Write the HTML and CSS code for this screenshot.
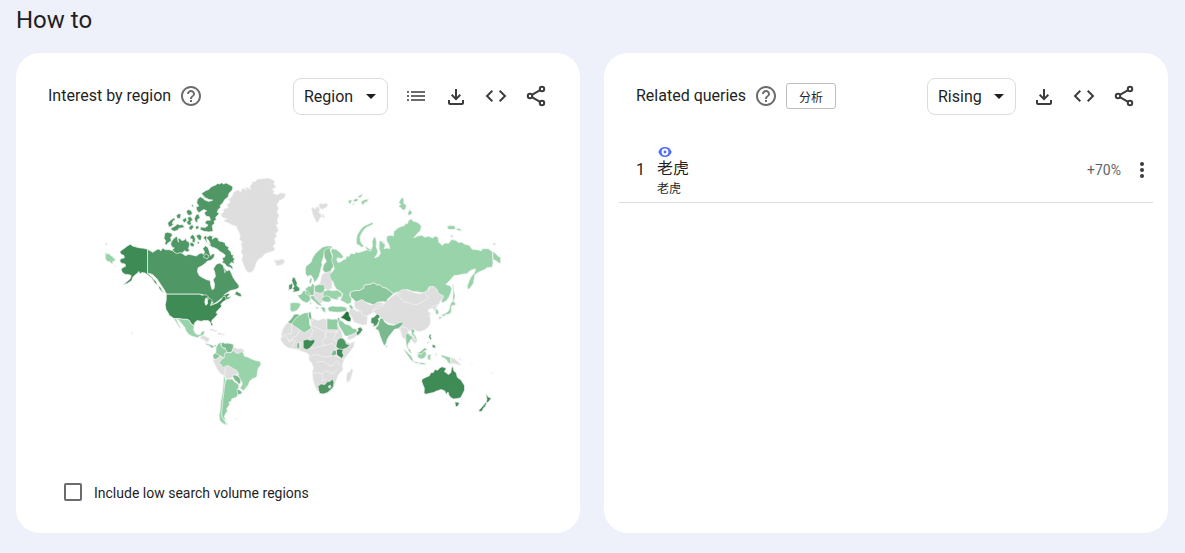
FILE: index.html
```html
<!DOCTYPE html>
<html lang="en">
<head>
<meta charset="utf-8">
<meta name="viewport" content="width=device-width, initial-scale=1">
<title>How to</title>
<link rel="stylesheet" href="styles.css">
</head>
<body>
<svg class="sprite" aria-hidden="true">
  <symbol id="help" viewBox="0 0 24 24"><path d="M11 18h2v-2h-2v2zm1-16C6.480 2 2 6.480 2 12s4.480 10 10 10 10-4.480 10-10S17.520 2 12 2zm0 18c-4.410 0-8-3.590-8-8s3.590-8 8-8 8 3.590 8 8-3.590 8-8 8zm0-14c-2.210 0-4 1.790-4 4h2c0-1.100.9-2 2-2s2 .9 2 2c0 2-3 1.750-3 5h2c0-2.250 3-2.500 3-5 0-2.210-1.790-4-4-4z"/></symbol>
  <symbol id="list" viewBox="0 0 24 24"><path d="M3 7h2v2H3zm4 0h14v2H7zm-4 4h2v2H3zm4 0h14v2H7zm-4 4h2v2H3zm4 0h14v2H7z"/></symbol>
  <symbol id="download" viewBox="0 0 24 24"><path d="M12 16.500l-5-5 1.400-1.450 2.600 2.600V5h2v7.650l2.600-2.600L17 11.500zM6 21c-1.100 0-2-.9-2-2v-3h2v3h12v-3h2v3c0 1.100-.9 2-2 2z"/></symbol>
  <symbol id="embed" viewBox="0 0 24 24"><path d="M9 16.600L4.400 12 9 7.400 7.600 6l-6 6 6 6zm6 0l4.600-4.600L15 7.400 16.400 6l6 6-6 6z"/></symbol>
  <symbol id="share" viewBox="0 0 24 24"><g fill="none" stroke="currentColor" stroke-width="2"><circle cx="18" cy="5" r="2.200"/><circle cx="6" cy="12" r="2.200"/><circle cx="18" cy="19" r="2.200"/><path d="M7.900 10.900l8.200-4.800M7.900 13.100l8.200 4.800"/></g></symbol>
  <symbol id="more" viewBox="0 0 24 24"><circle cx="12" cy="6" r="2"/><circle cx="12" cy="12" r="2"/><circle cx="12" cy="18" r="2"/></symbol>
</svg>

<main class="page">
  <h1 class="page-title">How to</h1>
  <div class="cards">
    <section class="card">
      <header class="card-head">
        <h2 class="card-title">Interest by region</h2>
        <button class="help" type="button" aria-label="Help"><svg class="icon"><use href="#help"/></svg></button>
        <div class="tools">
          <div class="picker">
            <select class="picker-select" aria-label="Resolution"><option>Region</option></select>
            <svg class="picker-arrow" viewBox="0 0 10 5" aria-hidden="true"><path d="M0 0h10L5 5z"/></svg>
          </div>
          <button class="tool muted" type="button" aria-label="Show as list"><svg class="icon"><use href="#list"/></svg></button>
          <button class="tool" type="button" aria-label="Download"><svg class="icon"><use href="#download"/></svg></button>
          <button class="tool" type="button" aria-label="Embed"><svg class="icon"><use href="#embed"/></svg></button>
          <button class="tool" type="button" aria-label="Share"><svg class="icon"><use href="#share"/></svg></button>
        </div>
      </header>

      <svg class="map" viewBox="300 510 1230 780" role="img" aria-label="World map of interest by region">
        <!-- Alaska, Canada and the Arctic islands -->
        <g transform="translate(285 510)">
          <path class="c1" d="M31 218l7 4-5 3zM31 244l6 8 4-4 6 8 5 1 4 7 6 2-4 6-5 1 1 7-6-1-4-5-7-1-6-8zM56 284l8 4-2 2z"/>
          <path class="c6" d="M157 237L157 308 165 316 175 326 183 334 187 346 178 336 170 324 160 315 150 308 140 306 134 311 131 303 126 309 118 315 112 322 110 330 98 338 83 344 95 334 105 325 108 315 98 312 90 312 82 306 78 298 82 292 91 288 90 281 80 279 74 272 76 266 88 262 86 255 78 252 74 244 82 238 90 232 98 226 106 222 112 227 120 229 130 232 145 234z"/>
          <path class="c5" d="M157 237L165 241 172 246 180 241 188 236 195 238 196 242 203 233 210 238 222 238 232 241 243 248 255 246 262 250 270 256 280 252 290 254 302 257 312 250 318 248 324 252 328 246 322 235 330 226 338 232 342 245 345 256 352 250 358 252 355 262 346 270 336 272 328 280 318 287 308 292 306 304 312 316 322 322 334 328 344 330 346 345 350 358 356 354 357 340 353 328 360 318 358 306 354 295 362 282 372 278 382 284 388 296 394 302 402 298 408 310 412 320 420 332 430 345 430 352 420 357 405 360 396 366 385 374 398 368 402 372 395 380 408 378 400 385 388 389 378 383 370 390 360 397 345 405 352 396 345 388 335 385 322 372 312 371 214 371 205 355 195 340 185 325 172 312 157 308zM189 344l8 8 3 8 8 8-8-4-8-9zM417 371l7-10 3 4 9 4 2 10-9-2z"/>
          <path class="c5" d="M318 70L330 62 340 58 348 50 362 44 366 40 372 42 378 38 384 42 392 39 402 44 412 50 410 60 400 70 398 80 388 88 382 98 374 106 375 112 368 118 365 126 371 130 360 142 363 148 356 152 357 160 350 166 353 183 340 185 325 183 314 178 316 170 330 172 338 165 328 158 334 150 345 150 342 140 332 138 326 128 334 122 325 118 316 124 310 128 303 118 302 110 310 108 304 98 306 88 314 80 322 84 328 90 340 94 352 90 340 88 328 82z"/>
          <path class="c5" d="M217 158l10-9 9-6 4 5-7 5-2 8 5-1-6 7-9 4zM227 173l10-4 10-8 6 3 8-1 7 8-9 2-8 1-4 6-10 3-9-4zM243 136l8-6 6 3-2 11-9 1zM261 149l10-7 4 9-9 7zM273 123l6-5 9 4 3 9-8 5-7-3zM290 103l4 3-1 5-5-4zM276 142l9-3 7 9-6 7 3 8-9 2-7-9 6-5zM281 170l9-7 5 7-6 9-8-1zM301 135l8-4 5 12-8 6 2 8-8-2-3-9zM299 169l10-3 2 8-8 4z"/>
          <path class="c5" d="M209 188l8-2 12 3 2 7-5 6 2 10-9 5-6 8-4-5 2-9-5-7zM229 213l7-9 8-6 3 6 3 12-4-10 8-2 5 7 8-2 4-6 3 9 7 3 2 9-4 11 4 5-7 5-9-4-5 7-9-1-9 3-8-5-5-7 6-5-7-3-4-9zM285 198l7-5 5 5 3 9-2 10-8-2 1-8-7-2zM302 195l11-3 6 7-3 12-8-3zM283 219l7-3 7 7-3 7-9-3zM307 213l5 2-2 7-5-3zM323 203l8-7 3 5 9-5 9 2-2 9 9-6 8 2 3 9 10 2 8 3 3 9 9 4-2 7 8 7 2 9 6 1-2 8 6 3-4 6 2 8-9-3-5 6 8 5 3 10-9-6-10-3-7-9-8-2 4-6-3-9 7-1 2-7-8-6-7-4-8-7-10-5-8-2-8-9-8-5-3-8zM333 203l2 14 10 5-5-11zM324 257l8-6 9 6-5 8-9-2zM385 290l6 9-3 8z"/>
        </g>

        <!-- Greenland, Svalbard, Iceland -->
        <g class="c0" transform="translate(645 510)">
          <path d="M16 132L25 125 22 118 38 112 34 104 44 96 40 88 50 78 52 70 60 62 68 60 75 66 78 58 86 54 92 62 90 52 100 54 104 60 103 48 110 40 108 36 120 34 124 28 140 26 155 24 168 28 178 34 172 42 180 46 178 54 168 58 176 62 172 70 184 74 196 68 210 72 206 82 198 88 190 92 184 104 188 115 184 125 190 136 184 150 188 158 182 165 188 180 180 190 183 198 176 206 180 218 172 228 178 235 174 242 160 246 148 250 140 260 130 266 122 276 118 290 112 302 103 307 95 304 88 294 84 282 78 270 82 255 76 245 80 232 76 222 80 215 72 208 74 196 70 185 66 178 62 168 50 164 38 158 26 154 28 148 36 146 20 142z"/>
          <path d="M286 113l6-2 5 7 4-8 9 1 2 9-4 6 8 6 2 8-6 3-4 11-6 3-4-9-5-9-3-9zM308 103l9-4 4 3 10-3 5 4-3 8-8 3-5 4-8-4zM321 130l3 5 3 8-8-2z"/>
          <path d="M176 268l8 3 5-4 8 1 7-2 3 7-6 8-10 4-11-1 3-5-7-4z"/>
        </g>

        <!-- United States, Central and South America -->
        <g transform="translate(285 780)">
          <path class="c6" d="M213 101L312 101 320 104 332 103 340 110 330 114 328 125 331 134 336 130 336 118 343 113 350 120 347 130 345 135 365 127 377 118 383 108 389 108 392 118 382 124 376 130 378 138 370 146 362 155 366 162 357 172 350 178 348 185 352 192 350 197 346 192 344 184 338 180 325 180 318 182 305 180 298 186 296 195 288 190 280 178 272 176 262 176 250 174 236 174 222 164 218 156 212 146 210 132 213 118z"/>
          <path class="c1" d="M236 174L250 174 262 176 272 176 280 178 288 190 296 195 295 208 299 217 306 222 315 221 319 212 328 211 327 217 322 225 313 226 307 231 290 227 279 220 272 210 268 200 258 188 250 178 243 176 250 192 258 204 250 198 244 188 239 180zM107 214l5 2-2 3z"/>
          <path class="c0" d="M313 233l5-7 10-1 10 6 6 3-5 5 1 6-8-2-8-6zM340 207l7-3 10 3 9 5-6 1-11-4zM366 218l7-2 8 3 9 3-9 1-6-2-9 1z"/>
          <path class="c3" d="M329 246l8 4 8 1 8 4 9-3 1 5-8 1-5 5-9-8-9-3z"/>
          <path class="c2" d="M362 259l6-10 10-5-2 8 5 9 9 2 6 5-4 9 2 9-8 2-1 14-4-5-9-3-9-7-5-4 3-9z"/>
          <path class="c4" d="M378 248l3-3 8 3 6-1 12 2 8 3-2 6 5 5-6 8-8 4-9 2-3-8-3-7-9-2-3-7z"/>
          <path class="c0" d="M413 260l8 2 6 2 12-1 7 8-5 6-8 1-11 1-7-4-5-8z"/>
          <path class="c3" d="M352 283l7-6 9 4 7 5-7 7-8 4-7-5z"/>
          <path class="c0" d="M351 295l7 3 10-6 5-7 8 4 5 3-7 7-3 7 7 6 7 2 2 10-3 8 3 8-4 6-14-9-10-14-6-13z"/>
          <path class="c1" d="M378 296l8-5 1-13 9-3 10 1 8-7 8 9 9-1 7-5 6 6 2 8 10 3 12 6 12 4 14 3 2 10-8 10-3 12-1 12-5 5-9 3-8 7-4 11-8 10-6 8-11-9 6-8 1-9-7-8-3-10-9-8-8-7-11-3-10-7-10-1-5-9-8-1z"/>
          <path class="c0" d="M388 317l9-3 9 5 10 6 8 4 6 12-9-1-7 3-4 8-8 2-11 1-5-14 3-9z"/>
          <path class="c4" d="M411 346l6-4 8 3 8 6 3 14-7 6-3-7-8-5z"/>
          <path class="c4" d="M423 384l8 3 9 6-4 7-9 1-5-4z"/>
          <path class="c2" d="M390 359L397 354 405 355 410 354 415 361 423 366 430 373 429 378 434 375 428 382 424 390 427 398 426 406 415 412 409 413 407 421 400 424 402 431 397 438 393 444 396 450 390 458 386 468 392 478 383 475 377 462 375 445 378 425 382 405 384 385z"/>
          <path class="c1" d="M385 342L390 357 387 373 385 395 382 416 380 441 378 456 380 469 386 478 392 484 396 490 390 492 380 486 372 477 371 463 374 444 376 421 380 400 383 375zM419 472l4 2-4 1zM389 484l9 5-8 3z"/>
        </g>

        <!-- Europe and the Middle East -->
        <g transform="translate(810 690)">
          <path class="c0" d="M155 130l16-5 10-6 3 25-1 30-14 5-11-10-9 5-9-8 8-11 3-14zM127 187l11-6 12 2 9 6 2 15-10 14-11 6-8-13-9-12z"/>
          <path class="c2" d="M104 110L112 102 120 96 125 83 133 70 144 60 154 51 168 47 180 47 184 53 174 58 165 59 160 70 156 85 152 96 154 104 150 114 148 124 144 138 137 150 130 155 127 144 120 134 110 138 104 130zM119 142l5 4-4 13-6-3z"/>
          <path class="c3" d="M159 62L169 54 177 52 179 65 184 76 189 91 188 107 178 123 162 127 155 117 158 104 166 93 160 80z"/>
          <path class="c5" d="M66 140l7 3 3 8 3 6-1 8 5 5 4 3-1 8-11 3-10 1 5-7-5-4 5-6-4-8-3-10zM54 164l8-5 4 4-2 12-10 4z"/>
          <path class="c2" d="M80 194l11-3 6-10 12-1 5 7 6 8-2 14-9 8-12-4-8-7zM104 175l9-8 7 1 4-9 7 5-1 21-2 10-12 1-12-7zM130 167l13-5 17 1 2 12-5 12-12 1-14-5zM119 196l10-1 4 10 11 10 9 10-5 1-8-5-9-8-7-6-8-6zM133 229l10 1-3 6zM118 211l4 9-5 1z"/>
          <path class="c1" d="M58 218l10-2 16 1 6 3-4 10-8 10-13 4-7-5zM157 183L172 178 184 181 200 179 214 190 211 199 200 201 203 208 193 207 179 203 166 205 156 198z"/>
          <path class="c2" d="M154 201l10-5 12 2 5 12-9 5-13-2-7-6zM149 231l7-2 8 3-2 6 3 8-7-2zM172 230l12-4 14 2 13-1 16 4 1 10-15 3-14 1-12-1-12-1-4-7z"/>
          <path class="c2" d="M199 272L206 267 214 272 222 280 236 284 246 294 256 294 258 304 250 312 232 316 222 316 213 300 204 286z"/>
          <path class="c0" d="M229 318l12-6 13-6 6 7-12 9-17 6zM241 229l9 8 8 5 14-4 14 9 3 15-2 20-13 1-13-4-12-5-7-14-8-13 2-13zM268 226l12-6 13 4 11-2 13 9-4 12-14 4-14-4z"/>
          <path class="c5" d="M260 292l9-3 6 8-7 11-9 7-4-8 6-7z"/>
          <path class="c7" d="M216 255l7-9 5-5 6 5 1 9 5 8-1 10-10-1-10-6-11-5z"/>
          <path class="c4" d="M199 264l5-4 2 6-3 10-5-1z"/>
          <path class="c2" d="M233 222l8 1 5 7-1 6-7-1z"/>
          <path class="c0" d="M12 94l5-5 8 1 5-3 10 3 1 6-9 7-12 3z"/>
        </g>

        <!-- Africa -->
        <g transform="translate(810 690)">
          <path class="c0" d="M48 278L64 278 88 300 118 290 120 265 123 262 141 270 157 264 171 268 198 270 204 290 212 304 215 320 224 331 236 338 251 332 248 348 236 364 220 384 214 402 216 416 202 432 196 448 190 466 176 480 160 488 146 488 134 470 127 448 124 425 128 410 122 396 114 388 115 372 106 366 94 362 82 356 66 354 50 350 38 340 30 328 32 312 36 295z"/>
          <path class="border" d="M62 280v28l-27 7M86 301l-8 15-13 5-2 9-15-5M115 286l11 12-5 17-9 11M128 262l-9 23 14 4 32 15v21M168 266v37l35 2M165 304l-3 17-9 12 9 12M198 298l-4 14-6 10 8 13M162 345l20-7 14 11M121 353l22-4 19-7M121 374l18-3 18 8 21-1 9-12 9-15M138 394l18-3 20 14 14-2M126 426l28 2 8-9 12 5M154 428v23l14-8M174 424l13 5 12-16M100 300l14-2M32 318l18 2 5 16 9-9 11 6M190 375l19 6 10 6M187 400l10-10 12 16M196 335l15 10 10 10M83 354l-1-19 9 1-2 18M65 350l5-15"/>
          <path class="c4" d="M50 276l12-12 8-13 14-1 2 11-11 9-12 10zM112 247l8-4 1 12 2 7-5 5-6-8z"/>
          <path class="c2" d="M75 262L86 254 100 247 112 246 112 256 116 266 116 282 122 292 108 302 100 306 90 300 62 280zM168 264l15 2 14-1 5 8-3 5 3 20-34-1z"/>
          <path class="c6" d="M97 329l12-3 10 3 12-3 1 8-8 10-7 8-9 5-7-3-4-4zM196 357l11-4 10 3-3 9 4 9-6 9-15-11z"/>
          <path class="c4" d="M78 337l7-2 2 16-9 4zM187 358l9 1 1 12-9 4-8-2z"/>
          <path class="c5" d="M200 327l8-5 8 1 7 8 3 9 11 2-10 10-12 4-13-2-7-7 2-11z"/>
          <path class="c5" d="M141 466L150 459 162 461 168 453 178 451 185 444 189 455 187 468 178 478 170 485 158 489 147 488 143 478z"/>
          <path class="c0" d="M172 466l6-3 2 5-5 4z"/>
          <path class="c0" d="M228 427l8-4 6-11 4 7-4 14-6 18-7 4-3-10z"/>
        </g>

        <!-- Russia and Kazakhstan -->
        <g transform="translate(960 555)">
          <path class="c1" d="M32 190L45 192 58 202 67 213 62 220 50 217 47 224 52 232 60 228 66 224 75 220 76 211 83 214 90 204 100 206 104 200 112 202 125 198 137 194 146 190 151 192 154 181 153 168 158 157 163 155 166 170 165 185 170 197 167 208 160 217 171 214 178 204 174 190 174 178 175 166 182 168 188 175 188 164 192 182 188 190 198 188 206 190 203 178 196 166 197 153 208 150 217 152 218 138 224 134 228 129 240 124 250 121 253 114 258 116 262 106 270 101 275 108 285 110 295 116 300 124 297 136 288 145 277 158 290 152 302 150 310 156 322 153 333 158 343 152 350 157 352 170 360 178 364 180 370 173 382 174 390 163 402 165 412 172 420 170 430 177 443 180 452 192 465 193 480 196 482 190 500 190 513 200 514 234 512 245 505 246 497 246 490 252 480 256 468 262 460 268 458 280 455 295 445 308 440 312 437 303 441 290 448 275 459 262 462 250 455 252 445 256 436 265 425 266 412 269 398 270 385 285 373 297 384 300 391 308 388 322 382 336 374 346 366 351 360 350 362 340 361 330 350 326 345 313 335 304 322 306 318 318 305 322 288 319 275 318 258 312 250 319 238 321 225 320 217 325 208 318 195 308 185 306 176 298 168 299 158 292 148 296 130 299 127 309 115 315 100 316 88 320 86 330 92 340 90 352 80 356 70 350 58 344 62 335 66 325 57 317 45 310 40 300 36 288 28 280 26 268 32 262 40 250 36 236 32 225 35 210 30 200z"/>
          <path class="c1" d="M106 163L108 150 115 138 122 128 132 121 141 117 154 111 156 116 148 121 137 126 128 134 122 144 117 154 118 166 122 176 129 182 122 186 114 180 106 176zM131 182l10 6 10 8-8 0-8-6zM81 47l8-3 5 4-5 3 2 5-7-1zM93 56l8-2-4 6zM97 44l9-4 6 3-4 6-10 1zM109 35l7-4 9-6-4 11-7 2zM120 50l9-6 14-2-6 9-7 1-3 8-6-4zM233 52l4-8 6-8 5 9-1 9 9 7-4 12-7 2-7-8-7-3 8-6zM260 83l5-10 8 9-4 7-9 1zM377 124l8-3 14 1 3 5-4 6-10 0-9-2zM401 131l12-2 8 6-6 2zM387 149l7 2 1 5-7-2zM514 175l8-1v4l-7 1zM514 198l7 6 9 9 7 4v17l-7-2-7-6-9-4zM393 296l3 2 1 17 4 15-2 12-4 8-1-14 1-18z"/>
          <path class="c3" d="M88 320L100 316 115 315 127 309 130 299 148 296 158 292 168 299 176 298 185 306 195 308 208 318 217 325 208 333 200 340 196 350 184 348 172 350 160 361 148 354 135 351 124 344 113 347 104 352 98 342 88 334z"/>
          <path class="c0" d="M100 347l10 2 11-7 13 8 14 8 13-2 7-6 16 1 3 10-6 13-16 5-13 3-13 9-14-1-5-13-15-6-5-9z"/>
          <path class="c4" d="M169 380l8-4 10 7-8 7h-9z"/>
        </g>

        <!-- South and east Asia, Oceania -->
        <g transform="translate(1110 840)">
          <path class="c0" d="M4 88L18 76 33 72 47 63 57 52 67 45 76 38 85 32 92 28 104 27 114 31 130 37 145 40 160 35 172 28 175 18 188 18 196 26 202 40 215 45 216 52 208 60 202 72 190 76 182 84 172 86 170 94 178 96 175 106 178 118 176 130 169 141 160 148 148 152 138 152 128 147 118 150 110 152 106 164 98 166 90 160 86 148 78 136 70 132 58 130 44 124 34 116 24 106 14 100z"/>
          <path class="border" d="M76 42l9 8 14 15 16 2 11 5 11 0 16-8 13-6 6-8-10-8M3 93l13-8 14-5 12-11M76 43l13-5"/>
          <path class="c0" d="M180 80l12-7 6 2-5 10 5 5-5 3-6-6zM86 137l7 3 8-1 10 7-1 10 9 5 12 12 3 10-3 7-7-7-8-11-8 3 2 9 1 9-6-9-4-10-7-2-4-12z"/>
          <path class="c1" d="M192 87l6-2 4 9-1 7-6 1-3-8zM237 70l7-9 8 7-1 7-8-1-4 6 1 10-2 7-6 4-9 1-5 5-8-1 4-5 10-4 8-7 2-8zM202 109l8-2-1 6-5 4z"/>
          <path class="c5" d="M0 112l9-3 9-9 6 3 3 8-6 3 3 7-8 14-11 3 3-7-9-5z"/>
          <path class="c4" d="M12 143L20 135 24 122 28 112 36 114 40 124 52 132 68 134 80 128 92 124 96 128 88 138 80 144 70 146 62 156 54 166 48 176 44 192 38 194 32 180 26 164 22 150zM43 189l5 8-3 3z"/>
          <path class="c2" d="M103 159l8-1 4 6 7 2 2 8-8 5 1 6-5 1-3 9 7 14-6-5-5-10-1-14zM119 146l9-1 3 9-5 3 9 13 2 12-8 5 4-9-3-8-9-10z"/>
          <path class="c3" d="M111 202l5 4 5 11-5-1-5-8zM138 216l8-3 7-5 7-7 8 5-9 5-4 7-9 2z"/>
          <path class="c5" d="M174 162l6-2-2 10 4 5-5 2-5-7zM183 192l8 1 2 8-6 1-5-5zM167 190l4-8 1 4z"/>
          <path class="c1" d="M96 204l7 5 11 11 8 9 5 13-7-3-9-12-9-13zM122 242l12 1 12 3-1 3-15-3zM139 219l11 1 8-9 6 3 1 8-6 10-8 3-12-5zM169 222l11 0-3 5 2 12-6-3-4 2zM146 245l9 1 10 3-6 3-14-2zM211 222l8 3 8 2 10 3 2 20-10-5-3-7-9-7-8-3zM193 216l4 5-3 4z"/>
          <path class="c0" d="M237 229l12 5 12 10 9 10-13-3-9-3-9 0zM260 237l9-5-3 7z"/>
          <path class="c6" d="M152 295L164 289 174 285 178 276 186 275 190 266 199 268 205 261 212 258 222 261 224 264 219 272 231 281 238 276 240 262 244 256 247 270 254 276 258 290 268 297 274 306 279 314 279 328 274 338 268 350 258 353 246 354 238 350 232 342 230 333 224 340 220 330 210 326 196 330 186 335 172 338 164 340 158 337 159 322 154 310 151 302zM250 363l10 1 3 3-4 9-6 1zM342 340l4 3 5 6 8 3-6 8-6 5-3-2 2-8-1-7zM322 388l9-10 8-9 3-6 3 3-3 9-7 7-3 8-8 2z"/>
          <path class="c0" d="M358 277l7-3-4 5zM276 235l4 2-4 1zM299 246l5 3-5 0z"/>
        </g>
      </svg>

      <div class="low-volume">
        <input class="checkbox" type="checkbox" id="low-volume">
        <label class="low-label" for="low-volume">Include low search volume regions</label>
      </div>
    </section>

    <section class="card">
      <header class="card-head">
        <h2 class="card-title">Related queries</h2>
        <button class="help" type="button" aria-label="Help"><svg class="icon"><use href="#help"/></svg></button>
        <button class="analyze" type="button">分析</button>
        <div class="tools">
          <div class="picker">
            <select class="picker-select" aria-label="Sort"><option>Rising</option></select>
            <svg class="picker-arrow" viewBox="0 0 10 5" aria-hidden="true"><path d="M0 0h10L5 5z"/></svg>
          </div>
          <button class="tool" type="button" aria-label="Download"><svg class="icon"><use href="#download"/></svg></button>
          <button class="tool" type="button" aria-label="Embed"><svg class="icon"><use href="#embed"/></svg></button>
          <button class="tool" type="button" aria-label="Share"><svg class="icon"><use href="#share"/></svg></button>
        </div>
      </header>

      <ul class="queries">
        <li class="query">
          <span class="rank">1</span>
          <div class="term">
            <svg class="eye" viewBox="0 0 14 10" aria-hidden="true"><path class="eye-shape" d="M7 0c3.200 0 5.600 1.900 6.700 5C12.600 8.100 10.200 10 7 10S1.400 8.100.3 5C1.400 1.900 3.800 0 7 0z"/><circle class="eye-ring" cx="7" cy="5" r="2.400"/></svg>
            <span class="term-name" lang="zh">老虎</span>
            <span class="term-note" lang="zh">老虎</span>
          </div>
          <span class="change">+70%</span>
          <button class="more" type="button" aria-label="More options"><svg class="icon"><use href="#more"/></svg></button>
        </li>
      </ul>
    </section>
  </div>
</main>
</body>
</html>
```

FILE: styles.css
```css
* { box-sizing: border-box; }

body {
  margin: 0;
  background: #eef1fa;
  color: #1f1f1f;
  font-family: Roboto, "Noto Sans CJK SC", sans-serif;
  font-size: 16px;
}

button, select { font: inherit; color: inherit; }
button { padding: 0; border: 0; background: none; cursor: pointer; }

.sprite { display: none; }
.icon { display: block; width: 24px; height: 24px; fill: currentColor; }

.page { padding: 4px 17px 20px 16px; }

.page-title {
  margin: 0 0 17px;
  font-size: 24px;
  line-height: 32px;
  font-weight: 400;
}

.cards {
  display: grid;
  grid-template-columns: 1fr 1fr;
  gap: 24px;
}

.card {
  display: flex;
  flex-direction: column;
  padding: 23px 0 30px;
  border-radius: 24px;
  background: #fff;
}

.card-head {
  display: flex;
  align-items: center;
  gap: 8px;
  min-height: 40px;
  padding: 0 24px 0 32px;
}

.card-title { margin: 0; font-size: 16px; line-height: 24px; font-weight: 400; }
.help { color: #6b6b6b; }

.analyze {
  width: 50px;
  height: 26px;
  border: 1px solid #bdbdbd;
  border-radius: 3px;
  font-size: 12px;
}

.tools { display: flex; align-items: center; margin-left: auto; }
.tool { display: grid; place-items: center; width: 40px; height: 40px; color: #3c3c3c; }
.muted { color: #6b6b6b; }

.picker { position: relative; margin-right: 8px; }
.picker-select {
  appearance: none;
  display: block;
  height: 37px;
  padding: 0 33px 0 10px;
  border: 1px solid #dadce0;
  border-radius: 8px;
  background: #fff;
}
.picker-arrow {
  position: absolute;
  top: 16px;
  right: 12px;
  width: 10px;
  height: 5px;
  fill: #1f1f1f;
  pointer-events: none;
}

.map {
  display: block;
  width: 73%;
  margin: 54px auto 0 84px;
  stroke: #f5f5f5;
  stroke-width: 2;
  stroke-linejoin: round;
}
.c0 { fill: #dedede; }
.c1 { fill: #98d3aa; }
.c2 { fill: #90cda2; }
.c3 { fill: #8ac79c; }
.c4 { fill: #7aba8e; }
.c5 { fill: #4f9865; }
.c6 { fill: #3f8b56; }
.c7 { fill: #26763f; }
.border { fill: none; stroke: #f5f5f5; }

.low-volume {
  display: flex;
  align-items: center;
  gap: 12px;
  margin: 50px 0 0 48px;
}
.checkbox {
  appearance: none;
  width: 18px;
  height: 18px;
  margin: 0;
  border: 2px solid #6b6b6b;
  border-radius: 2px;
  background: #fff;
}
.checkbox:checked { background: #6b6b6b; }
.low-label { padding-top: 2px; font-size: 14px; line-height: 20px; }

.queries { margin: 23px 15px 0; padding: 0; list-style: none; }
.query {
  display: flex;
  align-items: center;
  padding: 4px 0 5px 17px;
  border-bottom: 1px solid #dadce0;
}
.rank { width: 21px; line-height: 20px; }
.term { display: flex; flex-direction: column; padding-top: 4px; }
.eye { width: 14px; height: 10px; margin-left: 1px; }
.eye-shape { fill: #4f6ef7; }
.eye-ring { fill: #4f6ef7; stroke: #fff; stroke-width: 2; }
.term-name { line-height: 24px; }
.term-note { font-size: 12px; line-height: 16px; }
.change { margin-left: auto; color: #5f6368; font-size: 14px; }
.more { margin: 0 -1px 0 9px; color: #3c3c3c; }
```
